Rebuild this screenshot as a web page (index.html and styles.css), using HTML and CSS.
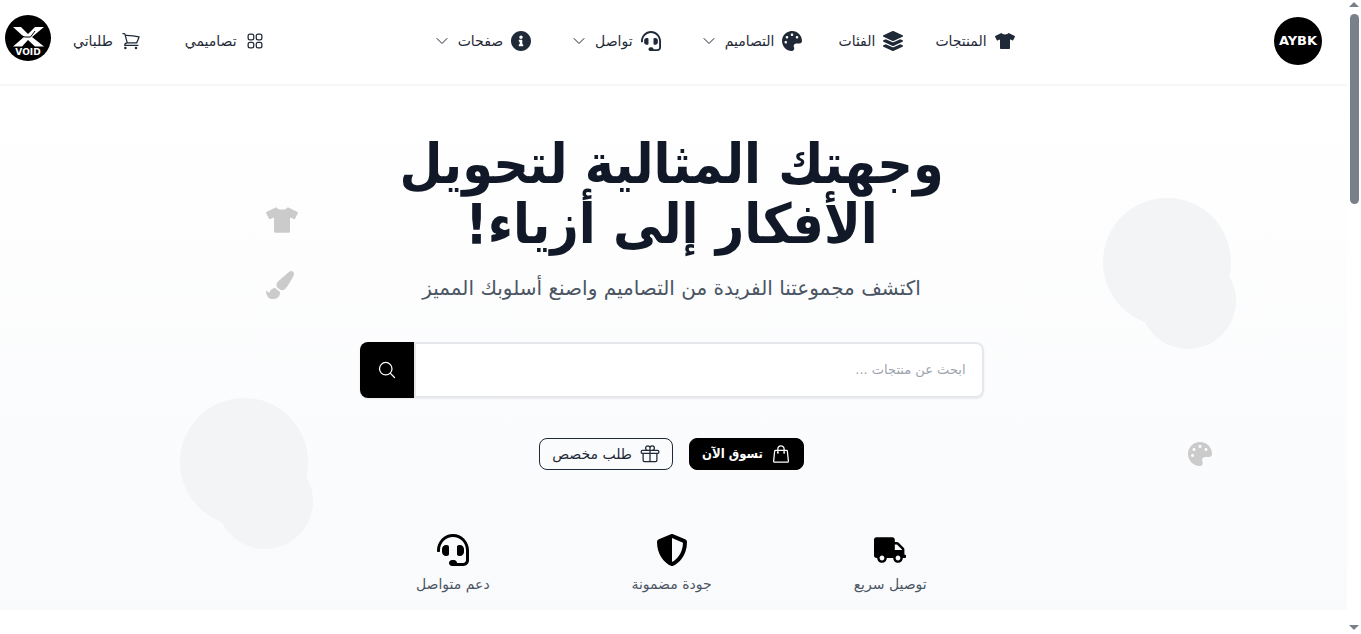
FILE: index.html
```html
<!DOCTYPE html>
<html lang="ar" dir="rtl">
<head>
<meta charset="utf-8">
<title>AYBK</title>
<link rel="stylesheet" href="styles.css">
</head>
<body>
<svg class="sprite" aria-hidden="true">
  <symbol id="shirt" viewBox="0 0 640 512"><path d="M631.2 96.5L436.5 0C416.4 27.8 371.9 47.2 320 47.2S223.6 27.8 203.5 0L8.8 96.5c-7.9 4-11.1 13.6-7.2 21.5l57.2 114.5c4 7.9 13.6 11.1 21.5 7.2l56.6-27.7c10.6-5.2 23 2.5 23 14.4V480c0 17.7 14.3 32 32 32h256c17.7 0 32-14.3 32-32V226.3c0-11.8 12.4-19.6 23-14.4l56.6 27.7c7.9 4 17.5.8 21.5-7.2L638.3 118c4-7.9.8-17.6-7.1-21.5z"/></symbol>
  <symbol id="layers" viewBox="0 0 512 512"><path d="M12.41 148.02l232.94 105.67c6.8 3.09 14.49 3.09 21.29 0l232.94-105.67c16.55-7.51 16.55-32.52 0-40.03L266.65 2.31a25.607 25.607 0 0 0-21.29 0L12.41 107.98c-16.55 7.51-16.55 32.53 0 40.04zm487.18 88.28l-58.09-26.33-161.64 73.27c-7.56 3.43-15.59 5.17-23.86 5.17s-16.29-1.74-23.86-5.17L70.51 209.97l-58.1 26.33c-16.55 7.5-16.55 32.5 0 40l232.94 105.59c6.8 3.08 14.49 3.08 21.29 0L499.59 276.3c16.55-7.5 16.55-32.5 0-40zm0 127.8l-57.87-26.23-161.86 73.37c-7.56 3.43-15.59 5.17-23.86 5.17s-16.29-1.74-23.86-5.17L70.29 337.87 12.41 364.1c-16.55 7.5-16.55 32.5 0 40l232.94 105.59c6.8 3.08 14.49 3.08 21.29 0L499.59 404.1c16.55-7.5 16.55-32.5 0-40z"/></symbol>
  <symbol id="palette" viewBox="0 0 512 512"><path d="M204.3 5C104.9 24.4 24.8 104.3 5.2 203.4c-37 187 131.7 326.4 258.8 306.7 41.2-6.4 61.4-54.6 42.5-91.7-23.1-45.4 9.9-98.4 60.9-98.4h79.7c35.8 0 64.8-29.6 64.9-65.3C511.5 97.1 368.1-26.9 204.3 5zM96 320c-17.7 0-32-14.3-32-32s14.3-32 32-32 32 14.3 32 32-14.3 32-32 32zm32-128c-17.7 0-32-14.3-32-32s14.3-32 32-32 32 14.3 32 32-14.3 32-32 32zm128-64c-17.7 0-32-14.3-32-32s14.3-32 32-32 32 14.3 32 32-14.3 32-32 32zm128 64c-17.7 0-32-14.3-32-32s14.3-32 32-32 32 14.3 32 32-14.3 32-32 32z"/></symbol>
  <symbol id="headset" viewBox="0 0 512 512"><path d="M192 208c0-17.67-14.33-32-32-32h-16c-35.35 0-64 28.65-64 64v48c0 35.35 28.65 64 64 64h16c17.67 0 32-14.33 32-32V208zm176 144c35.35 0 64-28.65 64-64v-48c0-35.35-28.65-64-64-64h-16c-17.67 0-32 14.33-32 32v112c0 17.67 14.33 32 32 32h16zM256 0C113.18 0 4.58 118.83 0 256v16c0 8.84 7.16 16 16 16h16c8.84 0 16-7.16 16-16v-16c0-114.69 93.31-208 208-208s208 93.31 208 208h-.12c.08 2.43.12 165.72.12 165.72 0 23.35-18.93 42.28-42.28 42.28H320c0-26.51-21.49-48-48-48h-32c-26.51 0-48 21.49-48 48s21.49 48 48 48h181.72c49.86 0 90.28-40.42 90.28-90.28V256C507.42 118.83 398.82 0 256 0z"/></symbol>
  <symbol id="info" viewBox="8 8 496 496"><path d="M256 8C119.043 8 8 119.083 8 256c0 136.997 111.043 248 248 248s248-111.003 248-248C504 119.083 392.957 8 256 8zm0 110c23.196 0 42 18.804 42 42s-18.804 42-42 42-42-18.804-42-42 18.804-42 42-42zm56 254c0 6.627-5.373 12-12 12h-88c-6.627 0-12-5.373-12-12v-24c0-6.627 5.373-12 12-12h12v-64h-12c-6.627 0-12-5.373-12-12v-24c0-6.627 5.373-12 12-12h64c6.627 0 12 5.373 12 12v100h12c6.627 0 12 5.373 12 12v24z"/></symbol>
  <symbol id="shield" viewBox="0 0 512 512"><path d="M466.5 83.7l-192-80a48.15 48.15 0 0 0-36.9 0l-192 80C27.7 91.1 16 108.6 16 128c0 198.5 114.5 335.7 221.5 380.3 11.8 4.9 25.1 4.9 36.9 0C360.1 472.6 496 349.3 496 128c0-19.4-11.7-36.9-29.5-44.3zM256.1 446.3l-.1-381 175.9 73.3c-3.3 151.4-82.1 261.1-175.8 307.7z"/></symbol>
  <symbol id="truck" viewBox="0 0 640 512"><path d="M624 352h-16V243.9c0-12.7-5.1-24.9-14.1-33.9L494 110.1c-9-9-21.2-14.1-33.9-14.1H416V48c0-26.5-21.5-48-48-48H48C21.5 0 0 21.5 0 48v320c0 26.5 21.5 48 48 48h16c0 53 43 96 96 96s96-43 96-96h128c0 53 43 96 96 96s96-43 96-96h48c8.8 0 16-7.2 16-16v-32c0-8.8-7.2-16-16-16zM160 464c-26.5 0-48-21.5-48-48s21.5-48 48-48 48 21.5 48 48-21.5 48-48 48zm320 0c-26.5 0-48-21.5-48-48s21.5-48 48-48 48 21.5 48 48-21.5 48-48 48zm80-208H416V144h44.1l99.9 99.9V256z"/></symbol>
  <symbol id="brush" viewBox="0 0 512 512"><path d="M167.02 309.34c-40.12 2.58-76.53 17.86-97.19 72.3-2.35 6.21-8 9.98-14.59 9.98-11.11 0-45.46-27.67-55.25-34.35C0 439.62 37.93 512 128 512c75.86 0 128-43.77 128-120.19 0-3.11-.65-6.08-.97-9.13l-88.01-73.34zM457.89 0c-15.16 0-29.37 6.71-40.21 16.45C213.27 199.05 192 203.34 192 257.09c0 13.7 3.25 26.76 8.73 38.7l63.82 53.18c7.21 1.8 14.64 3.03 22.39 3.03 62.11 0 98.11-45.47 211.16-256.46 7.38-14.35 13.9-29.85 13.9-45.99C512 20.64 486 0 457.89 0z"/></symbol>
  <symbol id="grid" viewBox="0 0 24 24"><path d="M3.75 6A2.25 2.25 0 016 3.75h2.25A2.25 2.25 0 0110.5 6v2.25a2.25 2.25 0 01-2.25 2.25H6a2.25 2.25 0 01-2.25-2.25V6zM3.75 15.75A2.25 2.25 0 016 13.5h2.25a2.25 2.25 0 012.25 2.25V18a2.25 2.25 0 01-2.25 2.25H6A2.25 2.25 0 013.75 18v-2.25zM13.5 6a2.25 2.25 0 012.25-2.25H18A2.25 2.25 0 0120.25 6v2.25A2.25 2.25 0 0118 10.5h-2.25a2.25 2.25 0 01-2.25-2.25V6zM13.5 15.75a2.25 2.25 0 012.25-2.25H18a2.25 2.25 0 012.25 2.25V18A2.25 2.25 0 0118 20.25h-2.25A2.25 2.25 0 0113.5 18v-2.25z"/></symbol>
  <symbol id="cart" viewBox="0 0 24 24"><path d="M2.25 3h1.386c.51 0 .955.343 1.087.835l.383 1.437M7.5 14.25a3 3 0 00-3 3h15.75m-12.75-3h11.218c1.121-2.3 2.1-4.684 2.924-7.138a60.114 60.114 0 00-16.536-1.84M7.5 14.25L5.106 5.272M6 20.25a.75.75 0 11-1.5 0 .75.75 0 011.5 0zm12.75 0a.75.75 0 11-1.5 0 .75.75 0 011.5 0z"/></symbol>
  <symbol id="gift" viewBox="0 0 24 24"><path d="M20.25 11.25v8.25a1.5 1.5 0 01-1.5 1.5H5.25a1.5 1.5 0 01-1.5-1.5v-8.25M12 4.875A2.625 2.625 0 109.375 7.5H12m0-2.625V7.5m0-2.625A2.625 2.625 0 1114.625 7.5H12m0 0V21m-9.375-9.75h18.75c.621 0 1.125-.504 1.125-1.125v-1.5c0-.621-.504-1.125-1.125-1.125H2.625c-.621 0-1.125.504-1.125 1.125v1.5c0 .621.504 1.125 1.125 1.125z"/></symbol>
  <symbol id="bag" viewBox="0 0 24 24"><path d="M15.75 10.5V6a3.75 3.75 0 10-7.5 0v4.5m11.356-1.993l1.263 12c.07.665-.45 1.243-1.119 1.243H4.25a1.125 1.125 0 01-1.12-1.243l1.264-12A1.125 1.125 0 015.513 7.5h12.974c.576 0 1.059.435 1.119 1.007zM8.625 10.5a.375.375 0 11-.75 0 .375.375 0 01.75 0zm7.5 0a.375.375 0 11-.75 0 .375.375 0 01.75 0z"/></symbol>
  <symbol id="search" viewBox="0 0 24 24"><path d="M21 21l-5.197-5.197m0 0A7.5 7.5 0 105.196 5.196a7.5 7.5 0 0010.607 10.607z"/></symbol>
  <symbol id="chevron" viewBox="0 0 24 24"><path d="M19.5 8.25l-7.5 7.5-7.5-7.5"/></symbol>
</svg>
<div class="shell">
  <div class="scrollbar" aria-hidden="true">
    <span class="arrow arrow-up"></span>
    <span class="thumb"></span>
    <span class="arrow arrow-down"></span>
  </div>
  <div class="page">
    <header class="header">
      <a class="brand" href="#">AYBK</a>
      <nav class="nav">
        <a class="nav-link" href="#"><svg class="icon solid"><use href="#shirt"/></svg>المنتجات</a>
        <a class="nav-link" href="#"><svg class="icon solid"><use href="#layers"/></svg>الفئات</a>
        <button class="nav-link menu" type="button"><svg class="icon solid"><use href="#palette"/></svg>التصاميم<svg class="icon line chevron"><use href="#chevron"/></svg></button>
        <button class="nav-link menu" type="button"><svg class="icon solid"><use href="#headset"/></svg>تواصل<svg class="icon line chevron"><use href="#chevron"/></svg></button>
        <button class="nav-link menu" type="button"><svg class="icon solid"><use href="#info"/></svg>صفحات<svg class="icon line chevron"><use href="#chevron"/></svg></button>
      </nav>
      <div class="account">
        <a class="nav-link menu" href="#"><svg class="icon line"><use href="#grid"/></svg>تصاميمي</a>
        <a class="nav-link menu" href="#"><svg class="icon line"><use href="#cart"/></svg>طلباتي</a>
        <a class="avatar" href="#" aria-label="VOID">
          <svg viewBox="0 0 46 46">
            <circle cx="23" cy="23" r="23" fill="#000"/>
            <path fill="#fff" d="M8 12h8l7 7 7-7h9L27 22l12 9.500H30L23 25l-6 6.500H8L19 22z"/>
            <path fill="none" stroke="#000" d="M17 21l3 1h5.500L30 16"/>
            <text class="avatar-text" x="23" y="40" text-anchor="middle" direction="ltr">VOID</text>
          </svg>
        </a>
      </div>
    </header>
    <main class="hero">
      <div class="bubbles bubbles-right"></div>
      <div class="bubbles bubbles-left"></div>
      <svg class="deco deco-shirt"><use href="#shirt"/></svg>
      <svg class="deco deco-brush"><use href="#brush"/></svg>
      <svg class="deco deco-palette"><use href="#palette"/></svg>
      <div class="content">
        <h1 class="title">وجهتك المثالية لتحويل<br>الأفكار إلى أزياء!</h1>
        <p class="subtitle">اكتشف مجموعتنا الفريدة من التصاميم واصنع أسلوبك المميز</p>
        <form class="search">
          <input class="search-input" type="search" placeholder="ابحث عن منتجات ..." aria-label="ابحث عن منتجات">
          <button class="search-button" type="button" aria-label="بحث"><svg class="icon line"><use href="#search"/></svg></button>
        </form>
        <div class="actions">
          <a class="button primary" href="#"><svg class="icon line"><use href="#bag"/></svg>تسوق الآن</a>
          <a class="button outline" href="#"><svg class="icon line"><use href="#gift"/></svg>طلب مخصص</a>
        </div>
        <ul class="features">
          <li class="feature"><svg class="feature-icon"><use href="#truck"/></svg>توصيل سريع</li>
          <li class="feature"><svg class="feature-icon"><use href="#shield"/></svg>جودة مضمونة</li>
          <li class="feature"><svg class="feature-icon"><use href="#headset"/></svg>دعم متواصل</li>
        </ul>
      </div>
    </main>
  </div>
</div>
</body>
</html>
```
FILE: styles.css
```css
* { box-sizing: border-box; }
body {
  margin: 0;
  background: #fff;
  color: #1f2937;
  font-family: "DejaVu Sans", sans-serif;
  font-size: 14px;
  line-height: 20px;
}
a { color: inherit; text-decoration: none; }
button, input { font: inherit; color: inherit; }
.sprite { display: none; }

.shell { display: grid; grid-template-columns: 14px 1fr; min-height: 100vh; }
.scrollbar {
  display: flex; flex-direction: column; align-items: center;
  height: 100vh; padding: 2px 0 4px; background: #fff;
}
.arrow { border: 5px solid transparent; border-top-width: 0; border-bottom: 5px solid #7a808a; }
.arrow-down { margin-top: auto; transform: rotate(180deg); }
.thumb { width: 9px; height: 30vh; margin-top: 7px; border-radius: 5px; background: #7a808a; }

.header {
  display: flex; align-items: center;
  min-height: 86px; padding: 0 25px 3px 5px;
  border-bottom: 2px solid #f6f6f7; background: #fff;
}
.brand {
  display: grid; place-items: center;
  width: 48px; height: 48px; border-radius: 50%;
  background: #000; color: #fff;
  font: bold 13px "DejaVu Sans", sans-serif;
}
.nav { display: flex; align-items: center; gap: 32px; margin-inline-start: 19.7%; }
.nav-link {
  display: flex; align-items: center; gap: 8px;
  padding: 0; border: 0; background: none; white-space: nowrap;
}
.menu { padding: 0 4px; }
.icon { flex: none; width: 20px; height: 20px; }
.solid, .deco, .feature-icon { fill: currentColor; }
.line { fill: none; stroke: currentColor; stroke-width: 1.5; stroke-linecap: round; stroke-linejoin: round; }
.chevron { width: 16px; height: 16px; }
.account { display: flex; align-items: center; gap: 36px; margin-inline-start: auto; }
.avatar { width: 46px; height: 46px; margin-bottom: 5px; margin-inline-start: -18px; }
.avatar svg { display: block; }
.avatar-text { fill: #fff; font: bold 9px "DejaVu Sans", sans-serif; }

.hero { position: relative; padding: 48px 28px 16px 24px; background: linear-gradient(#fff, #f9fafc); }
.bubbles { position: absolute; width: 133px; height: 151px; }
.bubbles::before, .bubbles::after { content: ""; position: absolute; border-radius: 50%; background: #f3f4f6; }
.bubbles::before { top: 0; left: 0; width: 128px; height: 128px; }
.bubbles::after { right: 0; bottom: 0; width: 96px; height: 96px; }
.bubbles-right { top: 112px; right: 111px; }
.bubbles-left { top: 312px; left: 180px; }
.deco { position: absolute; color: #cbcbcb; }
.deco-shirt { top: 121px; left: 266px; width: 32px; height: 26px; }
.deco-brush { top: 185px; left: 266px; width: 28px; height: 28px; }
.deco-palette { top: 356px; right: 135px; width: 24px; height: 24px; }

.content { position: relative; display: flex; flex-direction: column; align-items: center; max-width: 624px; margin: 0 auto; }
.title {
  margin: 0; color: #111827; text-align: center; white-space: nowrap;
  font: bold 55px/60px "DejaVu Sans Condensed", "DejaVu Sans", sans-serif;
}
.subtitle { margin: 20px 0 0; color: #4b5563; font-size: 20px; line-height: 28px; text-align: center; white-space: nowrap; }
.search {
  display: flex; width: 100%; height: 56px; margin: 40px 0;
  border-radius: 8px; box-shadow: 0 1px 2px rgba(0, 0, 0, .08);
}
.search-input {
  flex: 1; min-width: 0; padding: 0 16px;
  border: 2px solid #e5e7eb; border-radius: 0 8px 8px 0; background: #fff; outline: 0;
  appearance: none; font-size: 13px;
}
.search-input::placeholder { color: #9ca3af; opacity: 1; }
.search-button {
  display: grid; place-items: center; width: 54px; padding: 0;
  border: 0; border-radius: 8px 0 0 8px; background: #000; color: #fff;
}
.actions { display: flex; gap: 16px; }
.button {
  display: flex; align-items: center; gap: 8px; height: 32px; padding: 0 12px;
  border: 1px solid #1f2937; border-radius: 8px; white-space: nowrap;
}
.primary {
  border-color: #000; background: #000; color: #fff;
  font: bold 13px/20px "DejaVu Sans Condensed", "DejaVu Sans", sans-serif;
}
.features { display: grid; grid-template-columns: repeat(3, 1fr); gap: 32px; width: 100%; margin: 64px 0 0; padding: 0; list-style: none; }
.feature { display: flex; flex-direction: column; align-items: center; gap: 8px; color: #4b5563; }
.feature-icon { width: 32px; height: 32px; color: #000; }
```
